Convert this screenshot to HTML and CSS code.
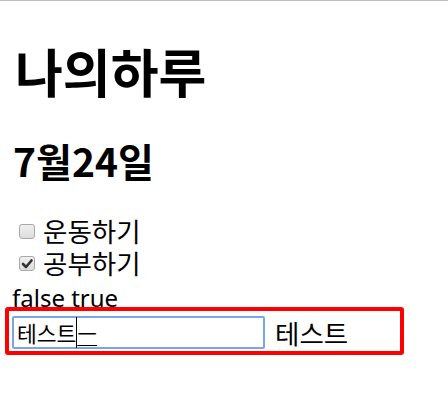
FILE: index.html
```html
<!DOCTYPE html>
<html lang="ko">
<head>
<meta charset="utf-8">
<title>나의하루</title>
<link rel="stylesheet" href="styles.css">
</head>
<body>
<h1 class="title">나의하루</h1>
<h2 class="date">7월24일</h2>
<div class="todos">
  <label class="todo"><span class="box"></span><span class="todo-text">운동하기</span></label>
  <label class="todo"><span class="box checked"><svg viewBox="0 0 16 15" width="16" height="15"><path d="M4 8 L7 11 L12.5 4.5" fill="none" stroke="#333" stroke-width="2.6" stroke-linecap="round" stroke-linejoin="round"/></svg></span><span class="todo-text">공부하기</span></label>
</div>
<div class="status">false true</div>
<div class="editor">
  <div class="field">테스트<span class="compose">ㅡ</span></div>
  <span class="echo">테스트</span>
</div>
</body>
</html>
```

FILE: styles.css
```css
html, body {
  background: #fff;
}
body {
  margin: 0;
  border-top: 1px solid #bdbdbd;
  padding: 0 12px;
  font-family: "Noto Sans", "Noto Sans CJK KR", sans-serif;
  color: #000;
}
.title {
  margin: 44px 0 0;
  padding-left: 3px;
  font-family: "Noto Sans CJK KR", sans-serif;
  font-size: 52px;
  line-height: 52px;
  font-weight: 700;
}
.date {
  margin: 44px 0 0;
  padding-left: 1px;
  font-family: "Noto Sans CJK KR", sans-serif;
  font-size: 39px;
  line-height: 39px;
  font-weight: 700;
}
.todos {
  margin-top: 35px;
}
.todo {
  display: flex;
  align-items: center;
  height: 32px;
  font-family: "Noto Sans CJK KR", sans-serif;
  font-size: 26.5px;
  line-height: 26px;
}
.todo-text {
  display: block;
  line-height: 26px;
}
.box {
  box-sizing: border-box;
  width: 16px;
  height: 15px;
  margin: 0 8px 0 7px;
  border: 1px solid #a9a9a9;
  border-radius: 3px;
  background: linear-gradient(#f0f0f0, #dcdcdc);
  display: flex;
}
.box svg {
  margin: -1px;
}
.status {
  margin-top: 3px;
  font-size: 24px;
  line-height: 32px;
  height: 32px;
}
.editor {
  box-sizing: border-box;
  width: 399px;
  height: 48px;
  margin: -7px 0 0 -7px;
  border: 4px solid #ff0000;
  border-radius: 3px;
  padding: 5px 0 0 3px;
  display: flex;
  align-items: flex-start;
}
.field {
  box-sizing: border-box;
  width: 253px;
  height: 33px;
  border: 2px solid #7aa5ea;
  border-radius: 2px;
  padding: 0 3px;
  font-family: "Noto Sans CJK KR", sans-serif;
  font-size: 21.5px;
  line-height: 29px;
}
.compose {
  text-decoration: underline;
  text-decoration-thickness: 1px;
  text-underline-offset: 3px;
  border-left: 1px solid #000;
}
.echo {
  margin-left: 10px;
  font-family: "Noto Sans CJK KR", sans-serif;
  font-size: 26.5px;
  line-height: 33px;
}
```
